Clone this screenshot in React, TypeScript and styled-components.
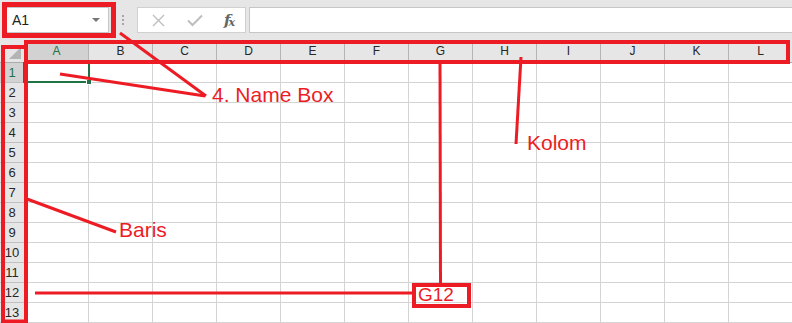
import React from 'react';
import styled, { createGlobalStyle } from 'styled-components';

const GlobalStyle = createGlobalStyle`
  html, body {
    margin: 0;
    padding: 0;
    background: #fff;
    font-family: 'Liberation Sans', Arial, sans-serif;
  }
  * {
    box-sizing: border-box;
  }
`;

const RED = '#ed1c24';
const GREEN = '#217346';

const Page = styled.div`
  position: relative;
  width: 792px;
  height: 323px;
  overflow: hidden;
  background: #fff;
`;

const Toolbar = styled.div`
  display: flex;
  align-items: center;
  height: 40px;
  padding-left: 6px;
  background: #e6e6e6;
`;

const NameBox = styled.div`
  display: flex;
  align-items: center;
  justify-content: space-between;
  width: 103px;
  height: 26px;
  padding: 0 8px 0 5px;
  background: #fff;
  border: 1px solid #c6c6c6;
`;

const NameText = styled.span`
  font-size: 14px;
  color: #222;
`;

const Caret = styled.span`
  width: 0;
  height: 0;
  border-left: 4px solid transparent;
  border-right: 4px solid transparent;
  border-top: 4px solid #777;
`;

const Grip = styled.div`
  display: flex;
  flex-direction: column;
  align-items: center;
  gap: 2px;
  width: 28px;
`;

const Dot = styled.span`
  width: 2px;
  height: 2px;
  background: #a6a6a6;
`;

const FormulaButtons = styled.div`
  display: flex;
  align-items: center;
  justify-content: space-between;
  width: 109px;
  height: 26px;
  padding: 0 12px 0 12px;
  background: #fff;
  border: 1px solid #d0d0d0;
`;

const IconBtn = styled.span`
  display: flex;
  align-items: center;
  justify-content: center;
  width: 16px;
  height: 16px;
`;

const Fx = styled.span`
  font-family: 'DejaVu Serif', 'Liberation Serif', serif;
  font-style: italic;
  font-weight: bold;
  font-size: 15px;
  color: #666;
  letter-spacing: -2px;

  sub {
    font-size: 11px;
    vertical-align: -1px;
  }
`;

const FormulaInput = styled.div`
  flex: 1;
  height: 26px;
  margin-left: 3px;
  background: #fff;
  border: 1px solid #c6c6c6;
  border-right: none;
`;

const Sheet = styled.div`
  display: grid;
  grid-template-columns: 25px repeat(12, 64px);
  grid-template-rows: 23px repeat(13, 20px);
`;

const Corner = styled.div`
  display: flex;
  align-items: flex-end;
  justify-content: flex-end;
  padding: 0 3px 3px 0;
  background: #e6e6e6;
  border-right: 1px solid #ababab;
  border-bottom: 1px solid #ababab;
`;

const CornerTriangle = styled.span`
  width: 12px;
  height: 12px;
  background: #b4b4b4;
  clip-path: polygon(100% 0, 100% 100%, 0 100%);
`;

const ColHead = styled.div<{ $active?: boolean }>`
  display: flex;
  align-items: center;
  justify-content: center;
  font-size: 12px;
  color: ${(p) => (p.$active ? GREEN : '#262626')};
  background: ${(p) => (p.$active ? '#d2d2d2' : '#e6e6e6')};
  border-right: 1px solid #b4b4b4;
  border-bottom: 1px solid #ababab;
`;

const RowHead = styled.div<{ $active?: boolean }>`
  display: flex;
  align-items: center;
  justify-content: center;
  font-size: 13px;
  color: ${(p) => (p.$active ? GREEN : '#262626')};
  background: ${(p) => (p.$active ? '#d2d2d2' : '#e6e6e6')};
  border-right: 1px solid #ababab;
  border-bottom: 1px solid #c0c0c0;
`;

const Cell = styled.div`
  position: relative;
  border-right: 1px solid #d4d4d4;
  border-bottom: 1px solid #d4d4d4;
`;

const Selection = styled.div`
  position: absolute;
  z-index: 1;
  left: -2px;
  top: -1px;
  width: 67px;
  height: 21px;
  border: 2px solid ${GREEN};
`;

const FillHandle = styled.span`
  position: absolute;
  right: -4px;
  bottom: -4px;
  width: 6px;
  height: 6px;
  background: ${GREEN};
  border: 1px solid #fff;
`;

const Overlay = styled.svg`
  position: absolute;
  z-index: 2;
  left: 0;
  top: 0;
  pointer-events: none;
`;

const Label = styled.span<{ $left: number; $top: number; $size?: number }>`
  position: absolute;
  z-index: 2;
  left: ${(p) => p.$left}px;
  top: ${(p) => p.$top}px;
  font-size: ${(p) => p.$size ?? 21}px;
  line-height: 24px;
  color: ${RED};
  white-space: nowrap;
`;

const columns = ['A', 'B', 'C', 'D', 'E', 'F', 'G', 'H', 'I', 'J', 'K', 'L'];
const rows = Array.from({ length: 13 }, (_, i) => i + 1);

const App: React.FC = () => {
  return (
    <Page>
      <GlobalStyle />
      <Toolbar>
        <NameBox>
          <NameText>A1</NameText>
          <Caret />
        </NameBox>
        <Grip>
          <Dot />
          <Dot />
          <Dot />
        </Grip>
        <FormulaButtons>
          <IconBtn>
            <svg width="13" height="13" viewBox="0 0 13 13">
              <path d="M1 1 L12 12 M12 1 L1 12" stroke="#bdbdbd" strokeWidth="1.3" fill="none" />
            </svg>
          </IconBtn>
          <IconBtn>
            <svg width="16" height="13" viewBox="0 0 16 13">
              <path d="M1 6.5 L5.5 11 L15 1.5" stroke="#bdbdbd" strokeWidth="2" fill="none" />
            </svg>
          </IconBtn>
          <Fx>
            f<sub>x</sub>
          </Fx>
        </FormulaButtons>
        <FormulaInput />
      </Toolbar>

      <Sheet>
        <Corner>
          <CornerTriangle />
        </Corner>
        {columns.map((c) => (
          <ColHead key={c} $active={c === 'A'}>
            {c}
          </ColHead>
        ))}
        {rows.map((r) => (
          <React.Fragment key={r}>
            <RowHead $active={r === 1}>{r}</RowHead>
            {columns.map((c) => (
              <Cell key={c + r}>
                {r === 1 && c === 'A' && (
                  <Selection>
                    <FillHandle />
                  </Selection>
                )}
              </Cell>
            ))}
          </React.Fragment>
        ))}
      </Sheet>

      <Overlay width="792" height="323" viewBox="0 0 792 323">
        <g fill="none" stroke={RED}>
          <rect x="4.5" y="4.5" width="109" height="31" strokeWidth="5" />
          <rect x="26" y="42" width="762" height="20" strokeWidth="4" />
          <rect x="3" y="47" width="23" height="274.5" strokeWidth="4" />
          <rect x="414" y="285" width="55" height="21" strokeWidth="4" />
        </g>
        <g stroke={RED} strokeWidth="3" strokeLinecap="butt">
          <line x1="120" y1="33" x2="206" y2="96" />
          <line x1="60" y1="74" x2="205" y2="96" />
          <line x1="521" y1="57" x2="516" y2="144" />
          <line x1="440" y1="62" x2="440.5" y2="284" />
          <line x1="27" y1="199" x2="116" y2="232" />
          <line x1="35" y1="293" x2="414" y2="293" />
        </g>
      </Overlay>

      <Label $left={212} $top={83}>4. Name Box</Label>
      <Label $left={527} $top={131}>Kolom</Label>
      <Label $left={119} $top={218}>Baris</Label>
      <Label $left={418} $top={283} $size={19}>G12</Label>
    </Page>
  );
};

export default App;
